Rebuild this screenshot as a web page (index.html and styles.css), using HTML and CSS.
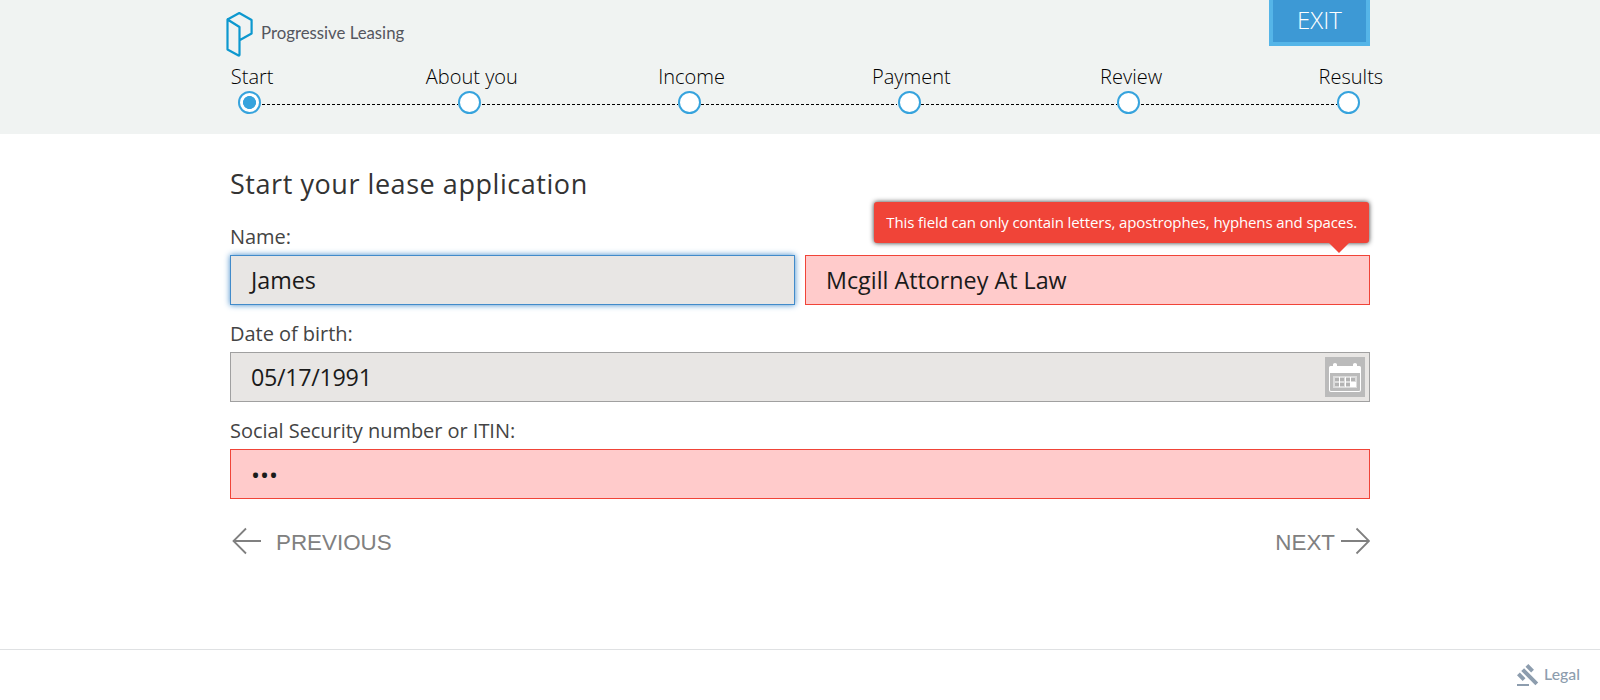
FILE: index.html
```html
<!DOCTYPE html>
<html lang="en">
<head>
<meta charset="utf-8">
<title>Progressive Leasing</title>
<link rel="stylesheet" href="styles.css">
</head>
<body>
<header class="header">
  <div class="topbar">
    <div class="logo">
      <svg class="logo-mark" width="28" height="46" viewBox="0 0 28 46" fill="none" stroke="#0d98cf" stroke-width="2.2" stroke-linejoin="round" stroke-linecap="round"><path d="M1.500 8.500 13.300 2 25.600 9V22.500L14 29M1.500 8.500V38.500L12.500 44.500Q13.500 44.800 13.500 43.500V16Z"/></svg>
      <span class="logo-text">Progressive Leasing</span>
    </div>
    <button class="exit">EXIT</button>
  </div>
  <ol class="steps">
    <li class="step active"><span class="step-label">Start</span><span class="dot"></span></li>
    <li class="step"><span class="step-label">About you</span><span class="dot"></span></li>
    <li class="step"><span class="step-label">Income</span><span class="dot"></span></li>
    <li class="step"><span class="step-label">Payment</span><span class="dot"></span></li>
    <li class="step"><span class="step-label">Review</span><span class="dot"></span></li>
    <li class="step"><span class="step-label">Results</span><span class="dot"></span></li>
  </ol>
</header>
<main class="main">
  <h1 class="title">Start your lease application</h1>
  <form class="form">
    <div class="field">
      <label class="label">Name:</label>
      <div class="row">
        <div class="input focused">James</div>
        <div class="input invalid">Mcgill Attorney At Law
          <div class="tooltip">This field can only contain letters, apostrophes, hyphens and spaces.</div>
        </div>
      </div>
    </div>
    <div class="field">
      <label class="label">Date of birth:</label>
      <div class="input date">05/17/1991
        <svg class="calendar" width="40" height="40" viewBox="0 0 40 40"><rect width="40" height="40" fill="#bbb"/><path d="M4 10.500Q4 9 5.500 9H8V7.500Q8 6 10 6T12 7.500V9H28V7.500Q28 6 30 6T32 7.500V9H34.500Q36 9 36 10.500V33Q36 35 34 35H6Q4 35 4 33Z" fill="#fff"/><path d="M5 16H35V33Q35 34 34 34H6Q5 34 5 33Z" fill="#bbb"/><path d="M8 19H32V31H8Z" fill="#dcdcdc"/><path d="M10 21h4v3h-4zM15 21h4v3h-4zM21 21h4v3h-4zM26 21h4v3h-4zM10 26h4v3h-4zM15 26h4v3h-4zM21 26h4v3h-4z" fill="#b3b3b3"/><path d="M14 20h1v10h-1zM20 20h1v10h-1zM25 20h1v10h-1zM26 25h5v5h-5z" fill="#fff"/></svg>
      </div>
    </div>
    <div class="field">
      <label class="label">Social Security number or ITIN:</label>
      <div class="input invalid masked">•••</div>
    </div>
    <div class="nav">
      <a class="nav-link previous"><svg width="30" height="28" viewBox="0 0 30 28" fill="none" stroke="#808080" stroke-width="1.8"><path d="M15 1.500 2.500 14 15 26.500M2.500 14H30"/></svg><span>PREVIOUS</span></a>
      <a class="nav-link next"><span>NEXT</span><svg width="30" height="28" viewBox="0 0 30 28" fill="none" stroke="#808080" stroke-width="1.8"><path d="M16.500 1.500 29 14 16.500 26.500M29 14H1"/></svg></a>
    </div>
  </form>
</main>
<footer class="footer">
  <a class="legal"><svg width="24" height="24" viewBox="0 0 24 24" fill="#8d9dae"><path d="M1 22h12v2H1zM5.245 9.070l2.830-2.827 14.140 14.142-2.828 2.828zM12.317 2l5.657 5.656-2.830 2.830-5.654-5.660zM3.825 10.485l5.657 5.657-2.828 2.828-5.657-5.657z"/></svg><span>Legal</span></a>
</footer>
</body>
</html>
```
FILE: styles.css
```css
* { box-sizing: border-box; }
body {
  margin: 0;
  height: 700px;
  display: flex;
  flex-direction: column;
  overflow: hidden;
  background: #fff;
  font-family: "Open Sans", sans-serif;
}
.header { height: 134px; background: #f0f3f2; }
.topbar {
  width: 1148px;
  height: 63px;
  margin: 0 auto;
  padding: 0 4px 0 0;
  display: flex;
  justify-content: space-between;
  align-items: flex-start;
}
.logo { display: flex; align-items: center; padding-top: 11px; }
.logo-mark { flex: none; }
.logo-text {
  margin: -2px 0 0 7px;
  font: 16.8px/24px Lato, sans-serif;
  color: #54565e;
  white-space: nowrap;
}
.exit {
  width: 101px;
  height: 46px;
  padding: 0 0 2px;
  border: solid #55b5e8;
  border-width: 0 4px 4px;
  background: #3d99d5;
  color: #fff;
  font: 300 24px/40px "Open Sans", sans-serif;
}
.steps {
  width: 1320px;
  margin: 0 auto;
  padding: 0;
  display: grid;
  grid-template-columns: repeat(6, 219.75px);
  list-style: none;
}
.step { display: flex; flex-direction: column; align-items: center; position: relative; }
.step-label {
  margin-left: 4.5px;
  font-size: 20px;
  font-weight: 300;
  line-height: 27px;
  height: 28px;
  color: #000;
}
.dot {
  position: relative;
  width: 23px;
  height: 23px;
  border: 2px solid #36a3dd;
  border-radius: 50%;
  background: #fff;
}
.active .dot { background: radial-gradient(circle, #36a3dd 6.2px, #fff 6.8px); }
.step:not(:last-child)::after {
  content: "";
  position: absolute;
  top: 41px;
  left: calc(50% + 12px);
  width: 196px;
  height: 1px;
  background: repeating-linear-gradient(90deg, #000 0 3px, transparent 3px 5px);
}
.main { width: 1140px; margin: 0 auto; flex: 1; }
.title {
  margin: 29px 0 0;
  font-size: 27px;
  font-weight: 400;
  line-height: 42px;
  letter-spacing: 0.55px;
  color: #333;
}
.form { padding-top: 16px; }
.field { height: 97px; }
.label {
  display: block;
  height: 34px;
  font-size: 20px;
  line-height: 32px;
  letter-spacing: -0.04px;
  color: #444;
}
.row { display: grid; grid-template-columns: 1fr 1fr; gap: 10px; }
.input {
  position: relative;
  height: 50px;
  padding: 0 20px;
  border: 1px solid #a0a0a0;
  background: #e8e6e4;
  font-size: 23.3px;
  line-height: 48px;
  color: #1a1a1a;
}
.focused { border-color: #428bca; box-shadow: 0 0 6px #428bca; }
.invalid { border-color: #f04438; background: #ffcbcb; }
.masked { font-size: 24px; line-height: 50px; }
.date {
  display: flex;
  justify-content: space-between;
  padding-right: 4px;
  letter-spacing: -0.3px;
}
.calendar { margin-top: 4px; }
.tooltip {
  position: absolute;
  top: -54px;
  right: 0;
  height: 41px;
  padding: 0 12px;
  border-radius: 3px;
  background: #f04438;
  box-shadow: 0 0 5px #333;
  color: #fff;
  font-size: 15px;
  line-height: 41px;
  letter-spacing: -0.113px;
  white-space: nowrap;
}
.tooltip::after {
  content: "";
  position: absolute;
  top: 41px;
  right: 20px;
  border: solid transparent;
  border-width: 10px 10px 0;
  border-top-color: #f04438;
}
.nav { display: flex; justify-content: space-between; height: 47px; padding-top: 12px; }
.nav-link {
  display: flex;
  align-items: center;
  height: 34px;
  color: #808080;
  font: 22.4px/34px "Liberation Sans", Arial, sans-serif;
}
.nav-link span { padding-top: 3px; }
.previous { gap: 15px; }
.previous svg { margin-left: 1px; }
.next { gap: 5px; }
.footer {
  height: 51px;
  border-top: 1px solid #dfe1e3;
  padding: 0 20px;
  display: flex;
  justify-content: flex-end;
}
.legal {
  display: flex;
  align-items: center;
  height: 47px;
  gap: 4px;
  color: #8d9dae;
  font: 500 15.8px/24px Lato, sans-serif;
}
```
